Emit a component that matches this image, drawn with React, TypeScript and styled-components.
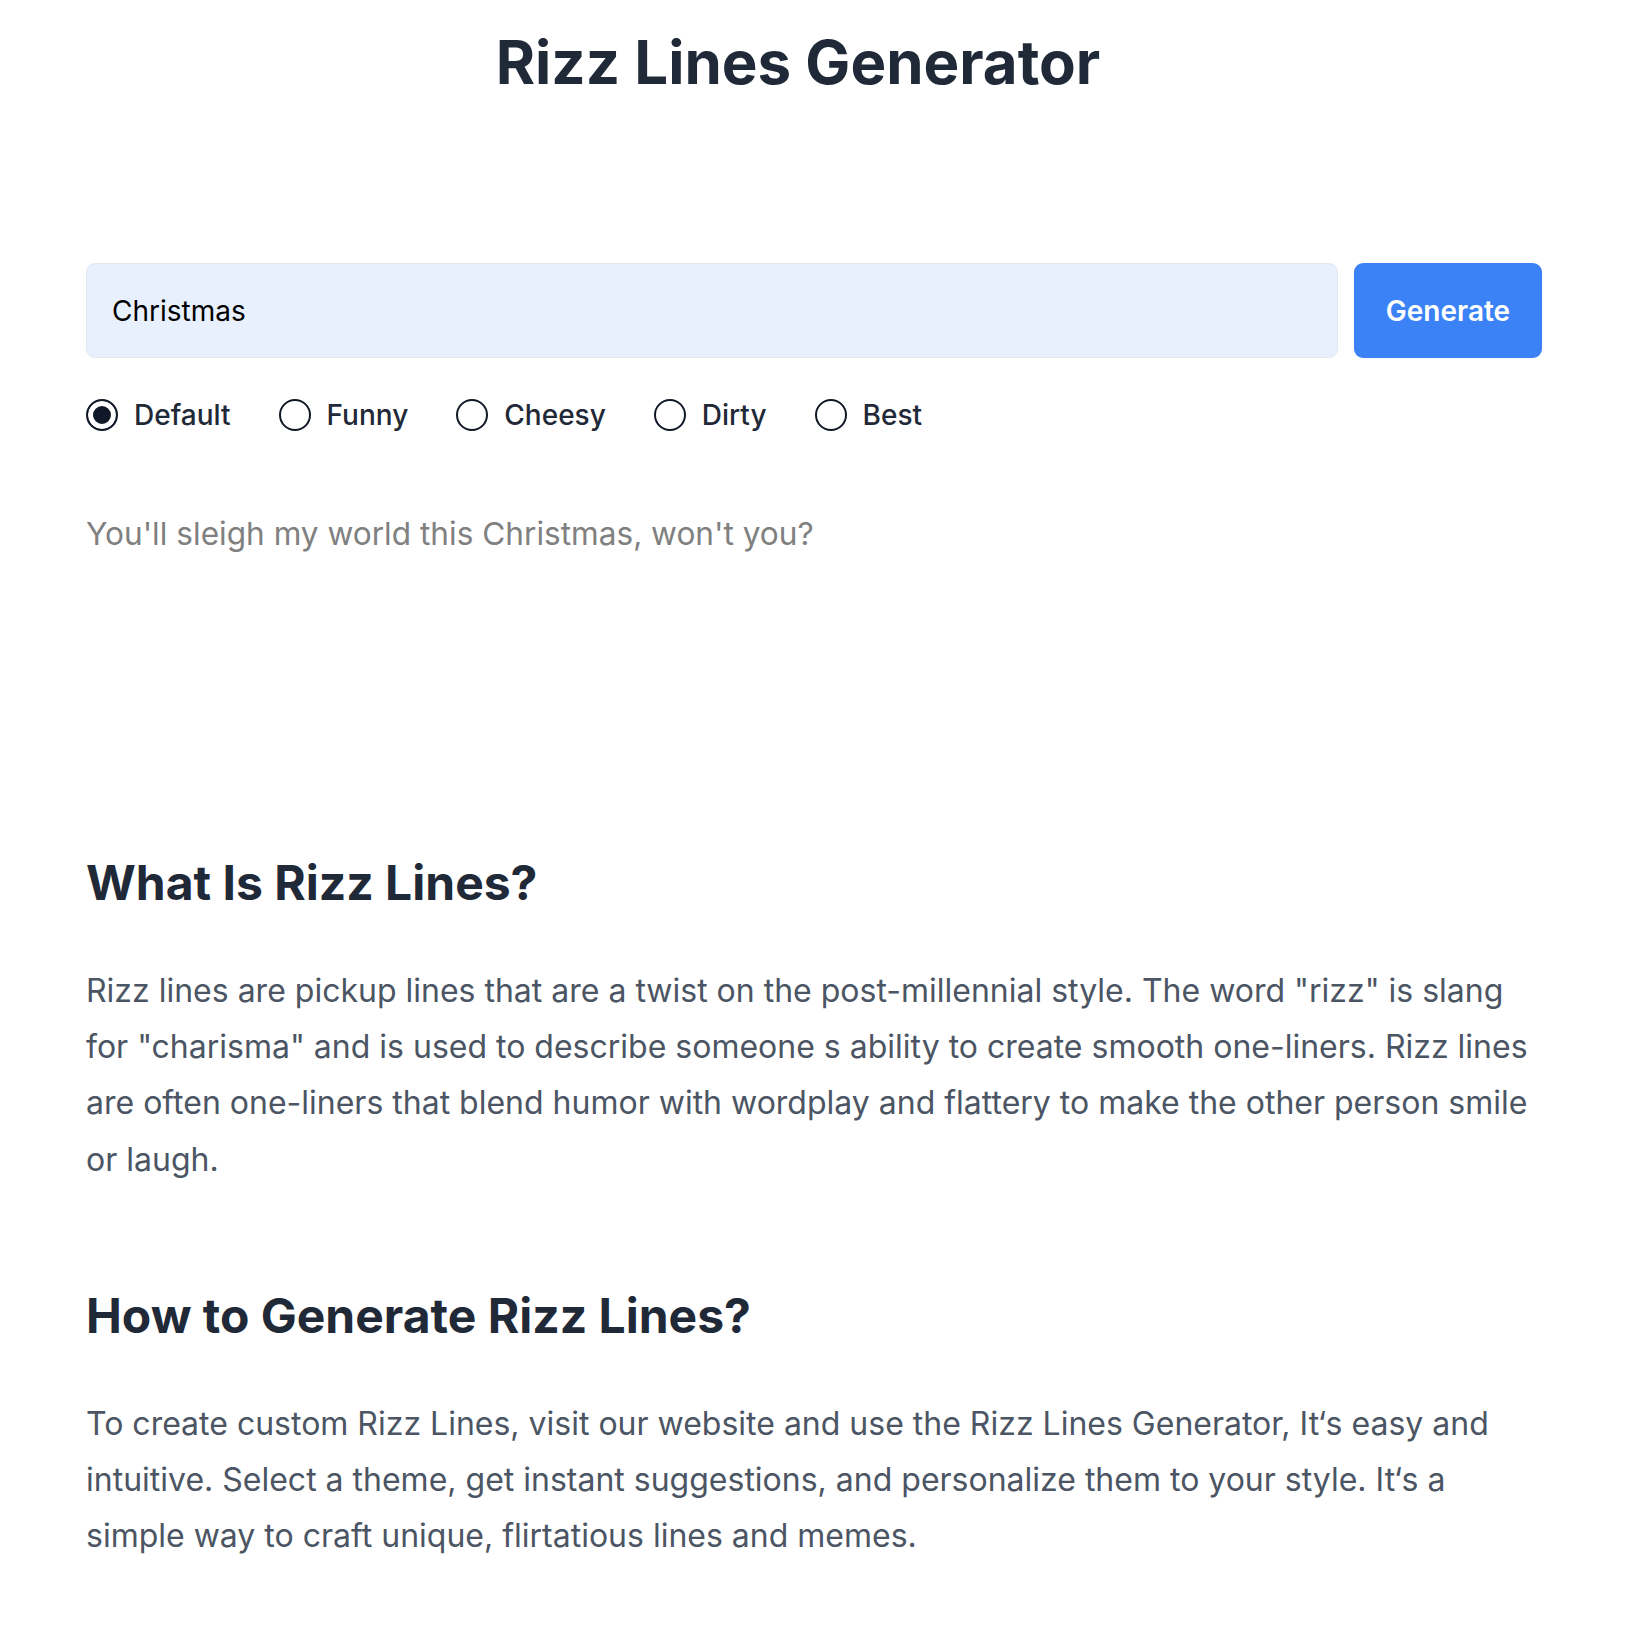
import React, { useState } from "react";
import styled, { createGlobalStyle } from "styled-components";

const GlobalStyle = createGlobalStyle`
  body {
    margin: 0;
    background: #ffffff;
    font-family: Inter, "Noto Sans", sans-serif;
  }
`;

const TONES = ["Default", "Funny", "Cheesy", "Dirty", "Best"];

const App: React.FC = () => {
  const [topic, setTopic] = useState<string>("Christmas");
  const [tone, setTone] = useState<string>("Default");

  return (
    <Page>
      <GlobalStyle />
      <Title>Rizz Lines Generator</Title>

      <Generator>
        <InputRow>
          <TopicInput value={topic} onChange={(e) => setTopic(e.target.value)} />
          <GenerateButton>Generate</GenerateButton>
        </InputRow>

        <ToneRow>
          {TONES.map((t) => (
            <ToneOption key={t}>
              <RadioDot checked={t === tone} onClick={() => setTone(t)} />
              {t}
            </ToneOption>
          ))}
        </ToneRow>

        <ResultLine>You'll sleigh my world this Christmas, won't you?</ResultLine>
      </Generator>

      <Section>
        <SectionTitle>What Is Rizz Lines?</SectionTitle>
        <SectionText>
          Rizz lines are pickup lines that are a twist on the post-millennial style. The word "rizz" is slang
          for "charisma" and is used to describe someone s ability to create smooth one-liners. Rizz lines
          are often one-liners that blend humor with wordplay and flattery to make the other person smile
          or laugh.
        </SectionText>
      </Section>

      <Section>
        <SectionTitle>How to Generate Rizz Lines?</SectionTitle>
        <SectionText>
          To create custom Rizz Lines, visit our website and use the Rizz Lines Generator, It‘s easy and
          intuitive. Select a theme, get instant suggestions, and personalize them to your style. It‘s a
          simple way to craft unique, flirtatious lines and memes.
        </SectionText>
      </Section>
    </Page>
  );
};

const Page = styled.main`
  padding: 0 98px 0 86px;
  color: #1f2937;
`;

const Title = styled.h1`
  margin: 0;
  padding: 24px 32px 0 0;
  text-align: center;
  font-size: 60px;
  font-weight: 700;
  line-height: 76px;
  color: #1f2937;
`;

const Generator = styled.div`
  padding-top: 163px;
  height: 590px;
`;

const InputRow = styled.div`
  display: flex;
  gap: 16px;
`;

const TopicInput = styled.input`
  flex: 1;
  height: 95px;
  box-sizing: border-box;
  padding: 0 25px;
  border: 1px solid #e2e8f0;
  border-radius: 9px;
  background: #e8f0fe;
  font-family: Inter, sans-serif;
  font-size: 28px;
  color: #000000;
  outline: none;
`;

const GenerateButton = styled.button`
  width: 188px;
  height: 95px;
  border: none;
  border-radius: 9px;
  background: #3b82f6;
  color: #ffffff;
  font-family: Inter, sans-serif;
  font-size: 28px;
  font-weight: 600;
  cursor: pointer;
`;

const ToneRow = styled.div`
  display: flex;
  align-items: center;
  gap: 48px;
  margin-top: 40px;
`;

const ToneOption = styled.label`
  display: flex;
  align-items: center;
  gap: 16px;
  font-size: 28px;
  font-weight: 500;
  color: #1f2937;
  cursor: pointer;
`;

const RadioDot = styled.span<{ checked: boolean }>`
  width: 32px;
  height: 32px;
  box-sizing: border-box;
  border-radius: 50%;
  border: 2px solid #111827;
  background: ${(p) => (p.checked ? "#111827" : "#ffffff")};
  box-shadow: ${(p) => (p.checked ? "inset 0 0 0 5px #ffffff" : "none")};
`;

const ResultLine = styled.p`
  margin: 82px 0 0;
  font-size: 31.6px;
  line-height: 40px;
  color: #808080;
`;

const Section = styled.section`
  margin-bottom: 98px;
`;

const SectionTitle = styled.h2`
  margin: 0 0 50px;
  font-size: 48px;
  font-weight: 700;
  line-height: 60px;
  color: #1f2937;
`;

const SectionText = styled.p`
  margin: 0;
  font-size: 32px;
  line-height: 56.2px;
  color: #4b5563;
`;

export default App;
